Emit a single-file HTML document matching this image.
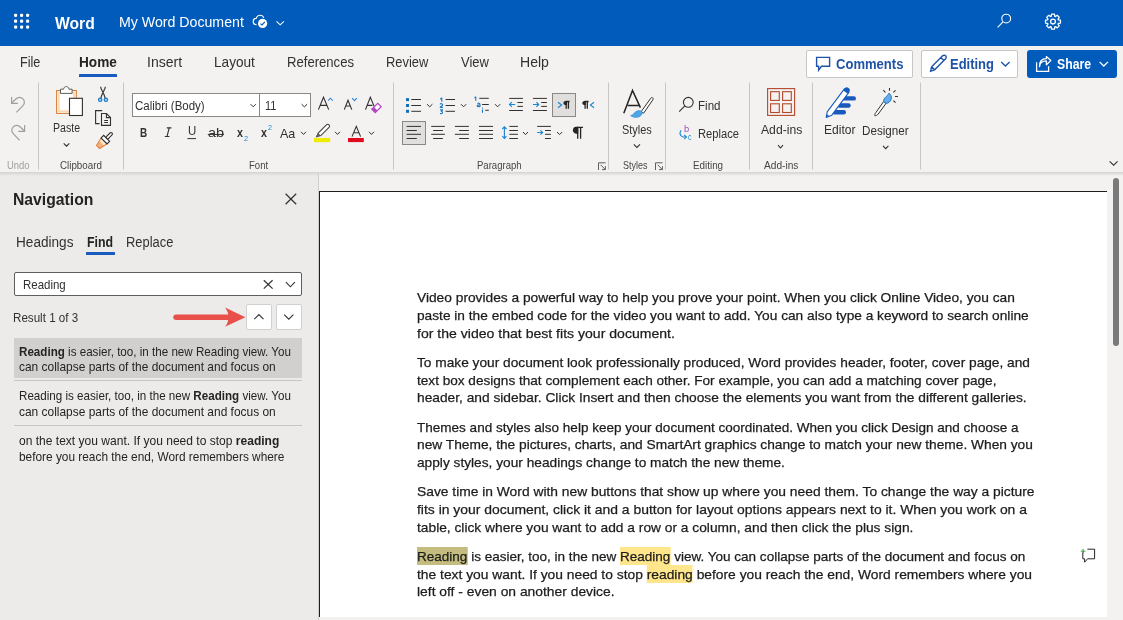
<!DOCTYPE html>
<html><head><meta charset="utf-8"><style>
html,body{margin:0;padding:0;width:1123px;height:620px;overflow:hidden;background:#f3f2f1;font-family:"Liberation Sans",sans-serif;}
.a{position:absolute;box-sizing:border-box;}
.t{position:absolute;white-space:nowrap;transform-origin:0 0;}
#txt{position:absolute;left:0;top:0;width:1123px;height:620px;will-change:transform;}
.t b{font-weight:700;}
.hl{background:#ffe68c;padding:1.5px 0 1px;}
.hc{background:#c4bd7f;padding:1.5px 0 1px;}
#hdr{left:0;top:0;width:1123px;height:46px;background:#005bbb;}
#rib{left:0;top:46px;width:1123px;height:126px;background:#f3f2f1;}
#shadow{left:0;top:172px;width:1123px;height:4px;background:linear-gradient(#d5d3d1,rgba(243,242,241,0));}
#nav{left:0;top:172px;width:319px;height:448px;background:#edebe9;border-right:1px solid #cfcdcb;}
#page{left:319px;top:191px;width:788px;height:426px;background:#fff;border-left:1px solid #1e1e1e;border-top:1px solid #1e1e1e;}
.btn{background:#fff;border:1px solid #c8c6c4;border-radius:2px;}
#svg{position:absolute;left:0;top:0;}
</style></head><body>
<div id="hdr" class="a"></div>
<div id="rib" class="a"></div>
<div id="nav" class="a"></div>
<div id="shadow" class="a"></div>
<div id="page" class="a"></div>
<!-- buttons -->
<div class="a btn" style="left:806px;top:50px;width:107px;height:28px;"></div>
<div class="a btn" style="left:921px;top:50px;width:97px;height:28px;"></div>
<div class="a" style="left:1027px;top:50px;width:90px;height:28px;background:#005bbb;border-radius:3px;"></div>
<!-- font boxes -->
<div class="a" style="left:132px;top:93px;width:179px;height:24px;background:#fff;border:1px solid #8a8886;"></div>
<div class="a" style="left:259px;top:93px;width:1px;height:24px;background:#8a8886;"></div>
<!-- selected buttons -->
<div class="a" style="left:402px;top:121px;width:24px;height:24px;background:#e1dfdd;border:1px solid #8a8886;"></div>
<div class="a" style="left:552px;top:93px;width:24px;height:24px;background:#e1dfdd;border:1px solid #8a8886;"></div>
<!-- nav -->
<div class="a" style="left:14px;top:272px;width:288px;height:24px;background:#fff;border:1px solid #605e5c;border-radius:2px;"></div>
<div class="a" style="left:246px;top:304px;width:26px;height:26px;background:#fff;border:1px solid #d2d0ce;border-radius:2px;"></div>
<div class="a" style="left:276px;top:304px;width:26px;height:26px;background:#fff;border:1px solid #d2d0ce;border-radius:2px;"></div>
<div class="a" style="left:14px;top:338px;width:288px;height:40px;background:#d2d0ce;"></div>
<div class="a" style="left:14px;top:380px;width:288px;height:1px;background:#c8c6c4;"></div>
<div class="a" style="left:14px;top:425px;width:288px;height:1px;background:#c8c6c4;"></div>
<!-- scrollbar -->
<div class="a" style="left:1113px;top:178px;width:6px;height:168px;background:#7a7a7a;border-radius:3px;"></div>
<svg id="svg" width="1123" height="620" viewBox="0 0 1123 620">
<!-- header -->
<g fill="#fff">
<rect x="14" y="13.7" width="3.2" height="3.2" rx="1.1"/><rect x="20" y="13.7" width="3.2" height="3.2" rx="1.1"/><rect x="26" y="13.7" width="3.2" height="3.2" rx="1.1"/>
<rect x="14" y="19.6" width="3.2" height="3.2" rx="1.1"/><rect x="20" y="19.6" width="3.2" height="3.2" rx="1.1"/><rect x="26" y="19.6" width="3.2" height="3.2" rx="1.1"/>
<rect x="14" y="25.5" width="3.2" height="3.2" rx="1.1"/><rect x="20" y="25.5" width="3.2" height="3.2" rx="1.1"/><rect x="26" y="25.5" width="3.2" height="3.2" rx="1.1"/>
</g>
<g fill="none" stroke="#fff" stroke-width="1.1">
<path d="M256.5,24.6 C254.5,24.6 253.2,23.2 253.2,21.4 C253.2,19.6 254.6,18.4 256.2,18.4 C256.8,16.2 258.4,15.2 260.2,15.2 C262,15.2 263.3,16.4 263.8,17.8"/>
<path d="M276.5,21.3 L280.2,24.8 L283.9,21.3"/>
<circle cx="1006.2" cy="18.6" r="4.4"/>
<path d="M1003,21.9 L997.6,27.4"/>
</g>
<circle cx="262.6" cy="23.4" r="4.6" fill="#fff"/>
<path d="M260.4,23.6 L262,25 L264.9,21.9" fill="none" stroke="#005bbb" stroke-width="1.2"/>
<path d="M1060.46,20.15 L1060.46,23.05 L1058.29,23.42 L1058.03,24.05 L1059.30,25.85 L1057.25,27.90 L1055.45,26.63 L1054.82,26.89 L1054.45,29.06 L1051.55,29.06 L1051.18,26.89 L1050.55,26.63 L1048.75,27.90 L1046.70,25.85 L1047.97,24.05 L1047.71,23.42 L1045.54,23.05 L1045.54,20.15 L1047.71,19.78 L1047.97,19.15 L1046.70,17.35 L1048.75,15.30 L1050.55,16.57 L1051.18,16.31 L1051.55,14.14 L1054.45,14.14 L1054.82,16.31 L1055.45,16.57 L1057.25,15.30 L1059.30,17.35 L1058.03,19.15 L1058.29,19.78 Z" fill="none" stroke="#fff" stroke-width="1.3" stroke-linejoin="round"/>
<circle cx="1053" cy="21.6" r="2.4" fill="none" stroke="#fff" stroke-width="1.3"/>
<!-- top right buttons -->
<g fill="none" stroke="#1f54a5" stroke-width="1.4" stroke-linejoin="miter">
<path d="M816.6,57.4 L829.6,57.4 L829.6,66.3 L821.5,66.3 L818.6,70.2 L818.6,66.3 L816.6,66.3 Z"/>
<path d="M930.6,71.2 L931.6,66.8 L942.6,55.8 A2.1,2.1 0 0 1 945.6,58.8 L934.6,69.8 Z M940.8,57.6 L943.8,60.6 M931.6,66.8 L934.6,69.8"/>
<path d="M1001.2,61.9 L1005.4,66 L1009.6,61.9"/>
</g>
<g fill="none" stroke="#fff" stroke-width="1.3">
<path d="M1036.6,62.3 L1036.6,71.3 L1048.6,71.3 L1048.6,66.3"/>
<path d="M1039.6,66.6 C1039.6,62.6 1042.6,60.8 1046.4,60.8 L1046.4,64.8 L1050.8,60.6 L1046.4,56.6 L1046.4,58.6 C1041.6,58.6 1039.2,61.6 1039.6,66.6 Z" stroke-linejoin="round"/>
<path d="M1099.6,61.9 L1103.8,66 L1108,61.9"/>
</g>
<!-- undo/redo -->
<g fill="none" stroke="#a19f9d" stroke-width="1.2">
<path d="M11.6,97 L11.6,103.3 L17.9,103.3"/>
<path d="M12,102.8 L15.6,99.3 C17.6,97.4 20.2,97 22.2,98.3 C24.7,99.9 25.2,103.4 23,105.7 L16.4,112.4"/>
<path d="M24.6,125 L24.6,131.3 L18.3,131.3"/>
<path d="M24.2,130.8 L20.6,127.3 C18.6,125.4 16,125 14,126.3 C11.5,127.9 11,131.4 13.2,133.7 L19.6,140.4"/>
</g>
<!-- paste -->
<rect x="56.6" y="90.5" width="19.7" height="22.9" fill="#fff" stroke="#d67b33" stroke-width="1"/>
<rect x="58.6" y="92.5" width="15.7" height="18.9" fill="none" stroke="#fbd9b4" stroke-width="2.2"/>
<path d="M60.5,93.4 L60.5,89.2 L63.6,89.2 C63.9,87.4 64.9,86.6 66.3,86.6 C67.7,86.6 68.7,87.4 69,89.2 L72.1,89.2 L72.1,93.4 Z" fill="#fff" stroke="#605e5c" stroke-width="1"/>
<rect x="69.5" y="98.3" width="12.9" height="17.2" fill="#fff" stroke="#323130" stroke-width="1.1"/>
<path d="M63.7,143.4 L66.5,146.2 L69.3,143.4" fill="none" stroke="#323130" stroke-width="1.1"/>
<!-- cut -->
<g fill="none" stroke="#3b3a39" stroke-width="1.2">
<path d="M100.6,86.8 C101,90 103.6,92 105.2,98.2 M105.4,86.8 C105,90 102.4,92 100.8,98.2"/>
</g>
<g fill="#9fd8f7" stroke="#1f79c0" stroke-width="1.2"><circle cx="100.2" cy="99.8" r="1.7"/><circle cx="105.9" cy="99.8" r="1.7"/></g>
<!-- copy -->
<g fill="none" stroke="#323130" stroke-width="1.1">
<path d="M102.2,110.6 L95.6,110.6 L95.6,123.6 L99.6,123.6"/>
<path d="M101.5,113.5 L106.4,113.5 L110.5,117.6 L110.5,125.4 L101.5,125.4 Z M106.4,113.5 L106.4,117.6 L110.5,117.6"/>
<path d="M104.2,120.5 L108,120.5 M104.2,122.5 L108,122.5"/>
</g>
<!-- format painter -->
<g transform="translate(104.8,140.2) rotate(-45)">
<path d="M-1,-4.2 L-1,4.2 L-9.6,2.2 L-9.6,-2.2 Z" fill="#f6b07a" stroke="#e07b39" stroke-width="1" stroke-linejoin="round"/>
<path d="M-1.6,-3.4 L-1.6,3.4 L-4.6,2.6 L-4.6,-2.6 Z" fill="#fde7d3"/>
<rect x="-1" y="-4.2" width="3.6" height="8.4" fill="#fff" stroke="#323130" stroke-width="1.1"/>
<rect x="2.6" y="-1.4" width="7.6" height="2.8" rx="1.4" fill="#fff" stroke="#323130" stroke-width="1.1"/>
</g>
<!-- font group -->
<path d="M250.6,104.2 L253.2,106.8 L255.8,104.2" fill="none" stroke="#323130" stroke-width="1"/>
<path d="M301.6,104.2 L304.4,106.8 L307.2,104.2" fill="none" stroke="#323130" stroke-width="1"/>
<g fill="none" stroke="#323130" stroke-width="1.1">
<path d="M318.4,109.6 L323.5,97.2 L328.7,109.6 M320.2,105.4 L326.9,105.4"/>
<path d="M344.3,109.6 L348,100.2 L351.8,109.6 M345.6,106 L350.4,106"/>
<path d="M365.5,109.6 L370.3,97.2 L374.2,106.4 M367.2,105.4 L372.4,105.4"/>
</g>
<g fill="none" stroke="#2b88d8" stroke-width="1.1">
<path d="M328.1,100.6 L330.4,98.2 L332.8,100.6"/>
<path d="M352.2,98.2 L354.5,100.6 L356.8,98.2"/>
</g>
<path d="M371.8,109.2 L377.8,103.4 L381.2,106.8 L375.2,112.6 Z" fill="#fff" stroke="#b146c2" stroke-width="1.2"/>
<path d="M371.8,109.2 L374,107 L377.4,110.4 L375.2,112.6 Z" fill="#b146c2"/>
<!-- U underline, strike -->
<path d="M187.4,138.6 L196,138.6" stroke="#323130" stroke-width="1"/>
<path d="M207.8,134.4 L224,134.4" stroke="#323130" stroke-width="1"/>
<!-- Aa chevron -->
<g fill="none" stroke="#323130" stroke-width="1">
<path d="M301,131.8 L303.5,134.4 L306,131.8"/>
<path d="M335,131.8 L337.5,134.4 L340,131.8"/>
<path d="M369,131.8 L371.5,134.4 L374,131.8"/>
</g>
<!-- highlighter -->
<path d="M316.6,136.6 L318.2,133 L326.4,124.8 A1.6,1.6 0 0 1 329,127.4 L320.8,135.6 Z" fill="#fff" stroke="#484644" stroke-width="1.1"/>
<path d="M316.4,136.8 L318.2,133 L320.8,135.6 Z" fill="#605e5c"/>
<rect x="314" y="138" width="16.2" height="4.2" fill="#f0ec00"/>
<!-- font color -->
<path d="M352,136.6 L356.3,126.4 L360.6,136.6 M353.6,132.8 L359,132.8" fill="none" stroke="#323130" stroke-width="1.1"/>
<rect x="348" y="138" width="15.8" height="4.1" fill="#e00b1c"/>
<!-- separators -->
<g stroke="#c8c6c4" stroke-width="1">
<path d="M38.5,82.5 L38.5,169.5 M123.5,82.5 L123.5,169.5 M393.5,82.5 L393.5,169.5 M608.5,82.5 L608.5,169.5 M665.5,82.5 L665.5,169.5 M749.5,82.5 L749.5,169.5 M812.5,82.5 L812.5,169.5 M920.5,82.5 L920.5,169.5"/>
</g>
<!-- tab underline -->
<rect x="79" y="74" width="38" height="3" rx="0.5" fill="#185abd"/>
<!-- paragraph: bullets -->
<g fill="#1170b8">
<rect x="406" y="98.1" width="3" height="3"/><rect x="406" y="104" width="3" height="3"/><rect x="406" y="109.8" width="3" height="3"/>
</g>
<g stroke="#323130" stroke-width="1" fill="none">
<path d="M411.3,99.5 L421,99.5 M411.3,105.5 L421,105.5 M411.3,111.3 L421,111.3"/>
<path d="M427,104.2 L429.7,106.8 L432.4,104.2"/>
<path d="M445.6,99.5 L455,99.5 M445.6,105.5 L455,105.5 M445.6,111.3 L455,111.3"/>
<path d="M461,104.2 L463.6,106.8 L466.2,104.2"/>
<path d="M479.3,98.3 L488.8,98.3 M482.1,104.5 L488.8,104.5 M485.3,110.3 L488.8,110.3"/>
<path d="M495,104.2 L497.6,106.8 L500.2,104.2"/>
<!-- indents -->
<path d="M509.2,98.4 L522.9,98.4 M517.4,102.5 L522.9,102.5 M517.4,106.4 L522.9,106.4 M509.2,110.5 L522.9,110.5"/>
<path d="M532.9,98.4 L546.9,98.4 M541.2,102.5 L546.9,102.5 M541.2,106.4 L546.9,106.4 M532.9,110.5 L546.9,110.5"/>
<!-- align -->
<path d="M406.6,126.4 L421,126.4 M406.6,130.5 L416.8,130.5 M406.6,134.3 L421,134.3 M406.6,138.5 L416.8,138.5"/>
<path d="M431.2,126.4 L444.9,126.4 M433.1,130.5 L442.9,130.5 M431.2,134.3 L444.9,134.3 M433.1,138.5 L442.9,138.5"/>
<path d="M454.9,126.4 L468.9,126.4 M459.1,130.5 L468.9,130.5 M454.9,134.3 L468.9,134.3 M459.1,138.5 L468.9,138.5"/>
<path d="M479,126.4 L493,126.4 M479,130.5 L493,130.5 M479,134.3 L493,134.3 M479,138.5 L493,138.5"/>
<path d="M509.3,126.4 L517.9,126.4 M509.3,130.5 L517.9,130.5 M509.3,134.3 L517.9,134.3 M509.3,138.5 L517.9,138.5"/>
<path d="M523,132 L525.5,134.6 L528,132"/>
<path d="M537.2,126.4 L550.9,126.4 M545,130.5 L550.9,130.5 M545,134.3 L550.9,134.3 M545,138.5 L550.9,138.5"/>
<path d="M557,132 L559.6,134.6 L562.2,132"/>
</g>
<g fill="none" stroke="#1a86d0" stroke-width="1.1">
<path d="M509.6,104.5 L515.2,104.5 M511.8,102.2 L509.5,104.5 L511.8,106.8"/>
<path d="M533,104.5 L538.6,104.5 M536.4,102.2 L538.7,104.5 L536.4,106.8"/>
<path d="M504.4,127 L504.4,138.2 M502.3,129 L504.4,126.8 L506.5,129 M502.3,136.2 L504.4,138.4 L506.5,136.2"/>
<path d="M537.2,132.5 L542.6,132.5 M540.4,130.3 L542.7,132.5 L540.4,134.7"/>
<path d="M558,102.2 L561.6,105 L558,107.8"/>
<path d="M594,102.2 L590.4,105 L594,107.8"/>
</g>
<!-- find / replace -->
<g fill="none" stroke="#323130" stroke-width="1.1">
<circle cx="688.3" cy="102.3" r="4.9"/>
<path d="M684.8,105.8 L679.2,111.6"/>
<path d="M633.8,144.4 L636.9,147.4 L640,144.4"/>
<path d="M778,145.2 L780.5,148 L783,145.2"/>
<path d="M883,145.8 L885.7,148.6 L888.4,145.8"/>
</g>
<path d="M681.2,130.4 C679.2,132.6 679.6,136 683,137 L686.2,137" fill="none" stroke="#1a86d0" stroke-width="1.2"/>
<path d="M684.2,135 L686.4,137.1 L684.2,139.2" fill="none" stroke="#1a86d0" stroke-width="1.1"/>
<!-- styles icon -->
<path d="M623.8,113.2 L632.5,90.4 L640.4,107.6 M627.8,105.5 L639.2,105.5" fill="none" stroke="#252423" stroke-width="1.5"/>
<path d="M641.2,111.6 L650.8,98.2 A1.3,1.3 0 0 1 653,99.6 L643.6,113.2 Z" fill="#fff" stroke="#323130" stroke-width="1"/>
<path d="M630.6,115.6 C633.6,115.4 634.4,111.2 638.4,110.6 C640.4,110.3 642.2,111.6 642.4,112.8 C641.8,116 638.6,117.6 635.4,117.4 C633.4,117.3 631.6,116.6 630.6,115.6 Z" fill="#4ca6e3" stroke="#2b88d8" stroke-width="0.6"/>
<!-- dialog launchers -->
<g fill="none" stroke="#605e5c" stroke-width="1">
<path d="M598.5,170 L598.5,162.8 L605.6,162.8 M600.6,164.8 L605.2,169.4 M602,169.6 L605.4,169.6 L605.4,166.2"/>
<path d="M655.5,170 L655.5,162.8 L662.6,162.8 M657.6,164.8 L662.2,169.4 M659,169.6 L662.4,169.6 L662.4,166.2"/>
</g>
<!-- add-ins icon -->
<g fill="none" stroke="#b5482b" stroke-width="1.1">
<rect x="767.6" y="88.6" width="27" height="26.8"/>
<rect x="770.6" y="91.7" width="8.7" height="8.7"/><rect x="782.6" y="91.7" width="8.7" height="8.7"/>
<rect x="770.6" y="103.8" width="8.7" height="8.7"/><rect x="782.6" y="103.8" width="8.7" height="8.7"/>
</g>
<!-- editor icon -->
<g fill="#185abd">
<rect x="842" y="96.2" width="14" height="4.4" rx="2.2"/>
<rect x="837.5" y="103.3" width="13.2" height="4.4" rx="2.2"/>
<rect x="832" y="110" width="14" height="4.4" rx="2.2"/>
</g>
<path d="M826.2,117.4 L827.2,111.8 L844.4,88.8 L849,92.2 L831.8,115.2 Z" fill="#fff" stroke="#185abd" stroke-width="1.1" stroke-linejoin="round"/>
<path d="M843.2,90.4 L844.6,88.6 A1.6,1.6 0 0 1 849.2,92 L847.8,93.8 Z" fill="#185abd"/>
<path d="M826.2,117.4 L826.8,114.2 L829,115.8 Z" fill="#185abd"/>
<!-- designer icon -->
<path d="M874.8,115.6 C874.6,114.6 875,113.6 876,112.4 L883.6,101.6 L886,103.4 L878.2,114 C877.2,115.2 875.8,116 874.8,115.6 Z" fill="#fff" stroke="#323130" stroke-width="1"/>
<path d="M883.6,101.8 C883.2,99.6 885,97.4 886.8,96 C888,95 888.6,94 888.8,93.2 C890.6,94.2 891.6,96.2 891.4,98.2 C891,101 888.8,103.4 886,103.4 Z" fill="#62adea" stroke="#1f6fb5" stroke-width="0.9"/>
<g stroke="#323130" stroke-width="1.1">
<path d="M889.5,88 L889.5,90.8 M883.4,90.1 L885.4,92.5 M893.3,92.4 L895.6,90.3 M895,96.5 L897.9,96.5 M893.3,100.6 L895.6,102.6"/>
</g>
<!-- ribbon collapse chevron -->
<path d="M1109.6,161.4 L1113.6,165.2 L1117.6,161.4" fill="none" stroke="#323130" stroke-width="1.1"/>
<!-- nav close -->
<path d="M285.6,193.8 L296.2,204.2 M296.2,193.8 L285.6,204.2" stroke="#323130" stroke-width="1.2"/>
<!-- search box X, chevron -->
<path d="M263.8,280.2 L272.6,288.6 M272.6,280.2 L263.8,288.6" stroke="#323130" stroke-width="1.2"/>
<path d="M285.9,282.2 L290.4,286.8 L294.9,282.2" fill="none" stroke="#323130" stroke-width="1.1"/>
<!-- up/down -->
<path d="M254.3,319.2 L258.9,314.6 L263.5,319.2" fill="none" stroke="#323130" stroke-width="1.1"/>
<path d="M284.2,314.6 L288.8,319.2 L293.4,314.6" fill="none" stroke="#323130" stroke-width="1.1"/>
<!-- red arrow -->
<path d="M176,317.2 L229,317.2" stroke="#e8504a" stroke-width="5.4" stroke-linecap="round"/>
<path d="M225,307.6 L245.4,317.2 L225,326.8 C227.6,323.6 228.4,320.4 228.4,317.2 C228.4,314 227.6,310.8 225,307.6 Z" fill="#e8504a"/>
<!-- doc comment icon -->
<path d="M1082.8,552.2 L1082.8,558.8 L1084.6,558.8 L1084.6,562.2 L1087.6,558.8 L1094.6,558.8 L1094.6,549.2 L1087.4,549.2" fill="none" stroke="#252423" stroke-width="1"/>
<path d="M1080.8,551.2 L1085.4,551.2 M1083.1,548.9 L1083.1,553.5" stroke="#3b9b3b" stroke-width="1"/>
<path d="M166.8,127.9 L171.4,127.9 M164.8,136.5 L169.4,136.5 M169.2,127.9 L167,136.5" fill="none" stroke="#323130" stroke-width="1.1"/>
<!-- numbering digits -->
<g fill="none" stroke="#1a78c2" stroke-width="1.1" stroke-linejoin="round">
<path d="M440.2,99 L441.8,98.1 L441.8,101.8"/>
<path d="M440.1,104.3 C440.3,103.5 442.7,103.3 442.7,104.7 C442.7,105.8 440.4,106.5 440.2,107.4 L442.9,107.4"/>
<path d="M440.1,109.9 L442.7,109.9 L441.2,111.3 C443,111.3 443.1,113.9 440.1,113.6"/>
<path d="M474.4,97.8 L475.8,97 L475.8,100.8"/>
<path d="M477.4,103.6 C478.4,102.9 480,103 480,104.4 L480,106.8 M480,105 C478.4,104.8 477.2,105.2 477.2,106 C477.2,107 479,107 480,106.2"/>
<path d="M482.5,109.6 L482.5,112.8"/>
</g>
<circle cx="482.5" cy="108.2" r="0.6" fill="#1a78c2"/>
<!-- pilcrows -->
<g fill="#252423">
<path d="M578.2,126.8 L576,126.8 C574,126.8 572.9,128.6 572.9,130.3 C572.9,132 574,133.7 576,133.7 L578.2,133.7 Z"/>
<path d="M566.8,100.9 L565.4,100.9 C564.2,100.9 563.4,101.9 563.4,102.9 C563.4,103.9 564.2,104.9 565.4,104.9 L566.8,104.9 Z"/>
<path d="M585.7,100.9 L584.3,100.9 C583.1,100.9 582.3,101.9 582.3,102.9 C582.3,103.9 583.1,104.9 584.3,104.9 L585.7,104.9 Z"/>
</g>
<g fill="none" stroke="#252423" stroke-width="1.3">
<path d="M577.7,126.8 L577.7,138.8 M580.6,127.4 L580.6,138.8 M577,127.4 L583,127.4"/>
<path d="M566.2,101 L566.2,108.8 M568.4,101.5 L568.4,108.8 M565.8,101.5 L569.6,101.5"/>
<path d="M585.1,101 L585.1,108.8 M587.3,101.5 L587.3,108.8 M584.7,101.5 L588.6,101.5"/>
</g>
<rect x="86" y="252" width="29" height="3" rx="0.5" fill="#185abd"/>

</svg>
<div id="txt">
<span class="t" style="left:54.80px;top:13.72px;font-size:17.40px;line-height:19.44px;font-weight:700;color:#fff;transform:scaleX(0.9013);">Word</span>
<span class="t" style="left:118.62px;top:14.00px;font-size:14.50px;line-height:16.20px;font-weight:400;color:#fff;transform:scaleX(0.9762);">My Word Document</span>
<span class="t" style="left:19.51px;top:55.01px;font-size:14.20px;line-height:15.86px;font-weight:400;color:#323130;transform:scaleX(0.8921);">File</span>
<span class="t" style="left:79.00px;top:55.01px;font-size:14.20px;line-height:15.86px;font-weight:700;color:#252423;transform:scaleX(0.9614);">Home</span>
<span class="t" style="left:147.31px;top:55.01px;font-size:14.20px;line-height:15.86px;font-weight:400;color:#323130;transform:scaleX(0.9901);">Insert</span>
<span class="t" style="left:214.04px;top:55.01px;font-size:14.20px;line-height:15.86px;font-weight:400;color:#323130;transform:scaleX(0.9603);">Layout</span>
<span class="t" style="left:286.58px;top:55.01px;font-size:14.20px;line-height:15.86px;font-weight:400;color:#323130;transform:scaleX(0.9236);">References</span>
<span class="t" style="left:385.79px;top:55.01px;font-size:14.20px;line-height:15.86px;font-weight:400;color:#323130;transform:scaleX(0.9098);">Review</span>
<span class="t" style="left:460.80px;top:55.01px;font-size:14.20px;line-height:15.86px;font-weight:400;color:#323130;transform:scaleX(0.9152);">View</span>
<span class="t" style="left:520.31px;top:55.01px;font-size:14.20px;line-height:15.86px;font-weight:400;color:#323130;transform:scaleX(0.9898);">Help</span>
<span class="t" style="left:835.60px;top:56.51px;font-size:13.80px;line-height:15.41px;font-weight:700;color:#1f54a5;transform:scaleX(0.9452);">Comments</span>
<span class="t" style="left:950.20px;top:57.01px;font-size:13.80px;line-height:15.41px;font-weight:700;color:#1f54a5;transform:scaleX(0.9391);">Editing</span>
<span class="t" style="left:1056.70px;top:57.01px;font-size:13.80px;line-height:15.41px;font-weight:700;color:#fff;transform:scaleX(0.8869);">Share</span>
<span class="t" style="left:52.84px;top:122.01px;font-size:12.30px;line-height:13.74px;font-weight:400;color:#323130;transform:scaleX(0.8593);">Paste</span>
<span class="t" style="left:135.40px;top:100.01px;font-size:12.30px;line-height:13.74px;font-weight:400;color:#323130;transform:scaleX(0.9356);">Calibri (Body)</span>
<span class="t" style="left:264.50px;top:100.01px;font-size:12.30px;line-height:13.74px;font-weight:400;color:#323130;transform:scaleX(0.8897);">11</span>
<span class="t" style="left:622.00px;top:124.01px;font-size:12.30px;line-height:13.74px;font-weight:400;color:#323130;transform:scaleX(0.8909);">Styles</span>
<span class="t" style="left:697.56px;top:100.01px;font-size:12.30px;line-height:13.74px;font-weight:400;color:#323130;transform:scaleX(0.9401);">Find</span>
<span class="t" style="left:697.89px;top:128.21px;font-size:12.30px;line-height:13.74px;font-weight:400;color:#323130;transform:scaleX(0.9079);">Replace</span>
<span class="t" style="left:760.60px;top:124.01px;font-size:12.30px;line-height:13.74px;font-weight:400;color:#323130;transform:scaleX(0.9893);">Add-ins</span>
<span class="t" style="left:824.42px;top:124.01px;font-size:12.30px;line-height:13.74px;font-weight:400;color:#323130;transform:scaleX(0.9798);">Editor</span>
<span class="t" style="left:862.45px;top:125.01px;font-size:12.30px;line-height:13.74px;font-weight:400;color:#323130;transform:scaleX(0.9477);">Designer</span>
<span class="t" style="left:6.60px;top:159.91px;font-size:10.20px;line-height:11.39px;font-weight:400;color:#a19f9d;transform:scaleX(0.9235);">Undo</span>
<span class="t" style="left:59.80px;top:159.91px;font-size:10.20px;line-height:11.39px;font-weight:400;color:#484644;transform:scaleX(0.9604);">Clipboard</span>
<span class="t" style="left:249.00px;top:159.91px;font-size:10.20px;line-height:11.39px;font-weight:400;color:#484644;transform:scaleX(0.9390);">Font</span>
<span class="t" style="left:477.10px;top:159.91px;font-size:10.20px;line-height:11.39px;font-weight:400;color:#484644;transform:scaleX(0.9380);">Paragraph</span>
<span class="t" style="left:622.60px;top:159.91px;font-size:10.20px;line-height:11.39px;font-weight:400;color:#484644;transform:scaleX(0.8825);">Styles</span>
<span class="t" style="left:692.60px;top:159.91px;font-size:10.20px;line-height:11.39px;font-weight:400;color:#484644;transform:scaleX(0.9656);">Editing</span>
<span class="t" style="left:764.00px;top:159.91px;font-size:10.20px;line-height:11.39px;font-weight:400;color:#484644;transform:scaleX(0.9957);">Add-ins</span>
<span class="t" style="left:140.40px;top:125.91px;font-size:13.40px;line-height:14.97px;font-weight:700;color:#323130;transform:scaleX(0.7400);">B</span>
<span class="t" style="left:187.80px;top:125.40px;font-size:12.20px;line-height:13.63px;font-weight:400;color:#323130;transform:scaleX(0.9375);">U</span>
<span class="t" style="left:208.10px;top:125.91px;font-size:13.40px;line-height:14.97px;font-weight:400;color:#323130;transform:scaleX(1.0798);">ab</span>
<span class="t" style="left:236.60px;top:125.91px;font-size:13.40px;line-height:14.97px;font-weight:700;color:#323130;transform:scaleX(0.8000);">x</span>
<span class="t" style="left:243.60px;top:134.81px;font-size:7.50px;line-height:8.38px;font-weight:400;color:#1a86d0;transform:scaleX(0.9750);">2</span>
<span class="t" style="left:260.90px;top:125.91px;font-size:13.40px;line-height:14.97px;font-weight:700;color:#323130;transform:scaleX(0.8000);">x</span>
<span class="t" style="left:267.60px;top:124.01px;font-size:7.50px;line-height:8.38px;font-weight:400;color:#1a86d0;transform:scaleX(0.9500);">2</span>
<span class="t" style="left:280.40px;top:126.60px;font-size:13.40px;line-height:14.97px;font-weight:400;color:#323130;transform:scaleX(0.9332);">Aa</span>
<span class="t" style="left:684.00px;top:124.41px;font-size:9.00px;line-height:10.05px;font-weight:400;color:#9b4fb8;transform:scaleX(1.0400);">b</span>
<span class="t" style="left:687.90px;top:132.30px;font-size:9.00px;line-height:10.05px;font-weight:400;color:#1a86d0;transform:scaleX(0.7800);">c</span>
<span class="t" style="left:13.42px;top:191.00px;font-size:16.00px;line-height:17.87px;font-weight:700;color:#252423;transform:scaleX(0.9823);">Navigation</span>
<span class="t" style="left:15.53px;top:235.00px;font-size:14.00px;line-height:15.64px;font-weight:400;color:#323130;transform:scaleX(0.9716);">Headings</span>
<span class="t" style="left:87.40px;top:235.00px;font-size:14.00px;line-height:15.64px;font-weight:700;color:#252423;transform:scaleX(0.8830);">Find</span>
<span class="t" style="left:126.48px;top:235.00px;font-size:14.00px;line-height:15.64px;font-weight:400;color:#323130;transform:scaleX(0.9213);">Replace</span>
<span class="t" style="left:22.52px;top:278.41px;font-size:13.00px;line-height:14.52px;font-weight:400;color:#323130;transform:scaleX(0.8814);">Reading</span>
<span class="t" style="left:13.29px;top:311.10px;font-size:12.80px;line-height:14.30px;font-weight:400;color:#323130;transform:scaleX(0.9077);">Result 1 of 3</span>
<span class="t" style="left:18.50px;top:344.60px;font-size:12.80px;line-height:14.30px;font-weight:400;color:#252423;transform:scaleX(0.9079);"><b>Reading</b> is easier, too, in the new Reading view. You</span>
<span class="t" style="left:18.50px;top:360.30px;font-size:12.80px;line-height:14.30px;font-weight:400;color:#252423;transform:scaleX(0.9324);">can collapse parts of the document and focus on</span>
<span class="t" style="left:18.50px;top:388.80px;font-size:12.80px;line-height:14.30px;font-weight:400;color:#252423;transform:scaleX(0.9078);">Reading is easier, too, in the new <b>Reading</b> view. You</span>
<span class="t" style="left:18.50px;top:405.01px;font-size:12.80px;line-height:14.30px;font-weight:400;color:#252423;transform:scaleX(0.9324);">can collapse parts of the document and focus on</span>
<span class="t" style="left:18.50px;top:433.60px;font-size:12.80px;line-height:14.30px;font-weight:400;color:#252423;transform:scaleX(0.9406);">on the text you want. If you need to stop <b>reading</b></span>
<span class="t" style="left:18.50px;top:449.51px;font-size:12.80px;line-height:14.30px;font-weight:400;color:#252423;transform:scaleX(0.9266);">before you reach the end, Word remembers where</span>
<span class="t" style="left:416.60px;top:290.31px;font-size:13.60px;line-height:15.19px;font-weight:400;color:#1c1c1c;transform:scaleX(1.0113);-webkit-text-stroke:0.25px #1c1c1c;">Video provides a powerful way to help you prove your point. When you click Online Video, you can</span>
<span class="t" style="left:416.60px;top:308.00px;font-size:13.60px;line-height:15.19px;font-weight:400;color:#1c1c1c;transform:scaleX(1.0080);-webkit-text-stroke:0.25px #1c1c1c;">paste in the embed code for the video you want to add. You can also type a keyword to search online</span>
<span class="t" style="left:416.60px;top:325.72px;font-size:13.60px;line-height:15.19px;font-weight:400;color:#1c1c1c;transform:scaleX(1.0343);-webkit-text-stroke:0.25px #1c1c1c;">for the video that best fits your document.</span>
<span class="t" style="left:416.60px;top:354.97px;font-size:13.60px;line-height:15.19px;font-weight:400;color:#1c1c1c;transform:scaleX(1.0081);-webkit-text-stroke:0.25px #1c1c1c;">To make your document look professionally produced, Word provides header, footer, cover page, and</span>
<span class="t" style="left:416.60px;top:372.66px;font-size:13.60px;line-height:15.19px;font-weight:400;color:#1c1c1c;transform:scaleX(0.9997);-webkit-text-stroke:0.25px #1c1c1c;">text box designs that complement each other. For example, you can add a matching cover page,</span>
<span class="t" style="left:416.60px;top:390.36px;font-size:13.60px;line-height:15.19px;font-weight:400;color:#1c1c1c;transform:scaleX(1.0113);-webkit-text-stroke:0.25px #1c1c1c;">header, and sidebar. Click Insert and then choose the elements you want from the different galleries.</span>
<span class="t" style="left:416.60px;top:419.61px;font-size:13.60px;line-height:15.19px;font-weight:400;color:#1c1c1c;transform:scaleX(0.9950);-webkit-text-stroke:0.25px #1c1c1c;">Themes and styles also help keep your document coordinated. When you click Design and choose a</span>
<span class="t" style="left:416.60px;top:437.31px;font-size:13.60px;line-height:15.19px;font-weight:400;color:#1c1c1c;transform:scaleX(1.0105);-webkit-text-stroke:0.25px #1c1c1c;">new Theme, the pictures, charts, and SmartArt graphics change to match your new theme. When you</span>
<span class="t" style="left:416.60px;top:455.00px;font-size:13.60px;line-height:15.19px;font-weight:400;color:#1c1c1c;transform:scaleX(1.0080);-webkit-text-stroke:0.25px #1c1c1c;">apply styles, your headings change to match the new theme.</span>
<span class="t" style="left:416.60px;top:484.25px;font-size:13.60px;line-height:15.19px;font-weight:400;color:#1c1c1c;transform:scaleX(1.0160);-webkit-text-stroke:0.25px #1c1c1c;">Save time in Word with new buttons that show up where you need them. To change the way a picture</span>
<span class="t" style="left:416.60px;top:501.97px;font-size:13.60px;line-height:15.19px;font-weight:400;color:#1c1c1c;transform:scaleX(1.0231);-webkit-text-stroke:0.25px #1c1c1c;">fits in your document, click it and a button for layout options appears next to it. When you work on a</span>
<span class="t" style="left:416.60px;top:519.66px;font-size:13.60px;line-height:15.19px;font-weight:400;color:#1c1c1c;transform:scaleX(1.0122);-webkit-text-stroke:0.25px #1c1c1c;">table, click where you want to add a row or a column, and then click the plus sign.</span>
<span class="t" style="left:416.60px;top:548.91px;font-size:13.60px;line-height:15.19px;font-weight:400;color:#1c1c1c;transform:scaleX(0.9949);-webkit-text-stroke:0.25px #1c1c1c;"><span class="hc">Reading</span> is easier, too, in the new <span class="hl">Reading</span> view. You can collapse parts of the document and focus on</span>
<span class="t" style="left:416.60px;top:566.61px;font-size:13.60px;line-height:15.19px;font-weight:400;color:#1c1c1c;transform:scaleX(1.0165);-webkit-text-stroke:0.25px #1c1c1c;">the text you want. If you need to stop <span class="hl">reading</span> before you reach the end, Word remembers where you</span>
<span class="t" style="left:416.60px;top:584.31px;font-size:13.60px;line-height:15.19px;font-weight:400;color:#1c1c1c;transform:scaleX(1.0187);-webkit-text-stroke:0.25px #1c1c1c;">left off - even on another device.</span>
</div>
</body></html>
